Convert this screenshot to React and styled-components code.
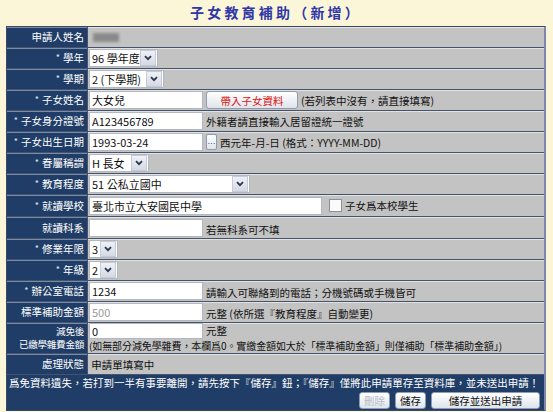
import styled, { createGlobalStyle } from 'styled-components'

const Global = createGlobalStyle`
    body {
        margin: 0;
        background: #fcf6d9;
        font-family: "Noto Sans CJK TC", "Noto Sans", sans-serif;
    }
`
const Page = styled.div`
    width: 553px;
    padding: 0 7px 0 6px;
    box-sizing: border-box;
`
const Title = styled.h1`
    margin: 0;
    height: 26px;
    line-height: 24px;
    text-align: center;
    font-size: 14px;
    font-weight: 700;
    letter-spacing: 3.2px;
    color: #3038a8;
`
const Table = styled.div`
    border: 1px solid #3d4963;
    border-right: 2px solid #7e86ae;
    background: #c3c3c3;
`
const Row = styled.div`
    display: grid;
    grid-template-columns: 81px 1fr;
    height: ${p => p.$h || 20}px;
    border-top: ${p => (p.$first ? 'none' : '1px solid #46536c')};
`
const Label = styled.div`
    background: #1f3d66;
    color: #fff;
    font-size: 10.5px;
    line-height: 14px;
    display: flex;
    flex-direction: column;
    align-items: flex-end;
    justify-content: center;
    padding-right: 3px;
    border-right: 1px solid #46536c;
    box-shadow: inset 0 1px 0 #7a8ba8;
    white-space: nowrap;
    overflow: hidden;
`
const Narrow = styled.div`
    font-size: 9.6px;
    line-height: 13px;
    letter-spacing: -0.3px;
`
const Star = styled.span`
    font-size: 9px;
    margin-right: 3px;
    color: #dfe4ee;
    vertical-align: 1px;
`
const Value = styled.div`
    display: flex;
    align-items: ${p => p.$align || 'center'};
    gap: ${p => p.$gap ?? 3}px;
    padding: ${p => (p.$align === 'flex-end' ? '0 0 1px 1px' : '0 0 0 1px')};
    font-size: 10.5px;
    color: #111;
    box-shadow: inset 0 1px 0 #e2e2e2;
    white-space: nowrap;
`
const Stack = styled.div`
    display: flex;
    flex-direction: column;
    justify-content: center;
    padding-left: 1px;
    font-size: 10.5px;
    color: #111;
    box-shadow: inset 0 1px 0 #e2e2e2;
    white-space: nowrap;
`
const Line = styled.div`
    display: flex;
    align-items: center;
    gap: 3px;
    height: 16px;
    line-height: 16px;
`
const Hint = styled.div`
    font-size: 10px;
    line-height: 14px;
    letter-spacing: -0.1px;
`
const Input = styled.input`
    width: ${p => p.$w}px;
    height: ${p => p.$h || 18}px;
    box-sizing: border-box;
    border: 1px solid #b3b8c0;
    background: #fff;
    padding: 0 2px;
    font-family: inherit;
    font-size: 11px;
    color: ${p => (p.disabled ? '#9a9a9a' : '#111')};
    outline: none;
`
const SelectBox = styled.div`
    width: ${p => p.$w}px;
    height: 18px;
    box-sizing: border-box;
    border: 1px solid #b3b8c0;
    background: #fff;
    display: flex;
    align-items: center;
    justify-content: space-between;
    font-size: 11px;
    padding-left: 2px;
`
const Arrow = styled.span`
    width: 14px;
    height: 14px;
    margin-right: 1px;
    border: 1px solid #c5ccd8;
    background: linear-gradient(#eef1f6, #d4dae5);
    display: flex;
    align-items: center;
    justify-content: center;
`
const Blur = styled.span`
    display: inline-block;
    width: 26px;
    height: 9px;
    margin-left: 4px;
    background: #8a8a8a;
    filter: blur(1.6px);
`
const Button = styled.button`
    height: ${p => p.$h || 18}px;
    width: ${p => p.$w}px;
    padding: 0;
    border: 1px solid #8f9bb0;
    border-radius: 3px;
    background: linear-gradient(#ffffff, #dfe4ec);
    font-family: inherit;
    font-size: 10.5px;
    color: ${p => p.$color || '#111'};
    cursor: pointer;
`
const DotButton = styled.span`
    width: 11px;
    height: 16px;
    box-sizing: border-box;
    border: 1px solid #8f9bb0;
    border-radius: 2px;
    background: linear-gradient(#ffffff, #dfe4ec);
    color: #2f5fb0;
    font-size: 8px;
    line-height: 18px;
    text-align: center;
`
const Check = styled.span`
    width: 11px;
    height: 11px;
    margin-left: 4px;
    border: 1px solid #8a8f98;
    background: #fafafa;
`
const Footer = styled.div`
    background: #1f3d66;
    border-top: 1px solid #46536c;
    height: 36px;
    padding: 1px 0 0 2px;
    box-sizing: border-box;
`
const Notice = styled.div`
    color: #fff;
    font-size: 10.5px;
    line-height: 13px;
    white-space: nowrap;
    overflow: hidden;
`
const Actions = styled.div`
    display: flex;
    justify-content: flex-end;
    gap: 5px;
    margin-top: 3px;
    padding-right: 4px;
`

const Chevron = () => (
    <svg width="8" height="6" viewBox="0 0 8 6">
        <path d="M1 1.2 L4 4.2 L7 1.2" fill="none" stroke="#2b3550" strokeWidth="1.8" />
    </svg>
)

const Select = ({ w, children }) => (
    <SelectBox $w={w}>
        <span>{children}</span>
        <Arrow><Chevron /></Arrow>
    </SelectBox>
)

const Req = ({ children }) => (
    <span><Star>*</Star>{children}</span>
)

const App = () => {
    return (
        <Page>
            <Global />
            <Title>子女教育補助（新增）</Title>
            <Table>
                <Row $first>
                    <Label>申請人姓名</Label>
                    <Value><Blur /></Value>
                </Row>
                <Row>
                    <Label><Req>學年</Req></Label>
                    <Value><Select w={69}>96 學年度</Select></Value>
                </Row>
                <Row>
                    <Label><Req>學期</Req></Label>
                    <Value><Select w={75}>2 (下學期)</Select></Value>
                </Row>
                <Row>
                    <Label><Req>子女姓名</Req></Label>
                    <Value>
                        <Input $w={114} defaultValue="大女兒" />
                        <Button $w={92} $color="#e01010">帶入子女資料</Button>
                        <span>(若列表中沒有，請直接填寫)</span>
                    </Value>
                </Row>
                <Row>
                    <Label><Req>子女身分證號</Req></Label>
                    <Value>
                        <Input $w={114} defaultValue="A123456789" />
                        <span>外籍者請直接輸入居留證統一證號</span>
                    </Value>
                </Row>
                <Row>
                    <Label><Req>子女出生日期</Req></Label>
                    <Value>
                        <Input $w={114} defaultValue="1993-03-24" />
                        <DotButton>…</DotButton>
                        <span>西元年-月-日 (格式：YYYY-MM-DD)</span>
                    </Value>
                </Row>
                <Row>
                    <Label><Req>眷屬稱謂</Req></Label>
                    <Value><Select w={60}>H 長女</Select></Value>
                </Row>
                <Row>
                    <Label><Req>教育程度</Req></Label>
                    <Value><Select w={161}>51 公私立國中</Select></Value>
                </Row>
                <Row $h={21}>
                    <Label><Req>就讀學校</Req></Label>
                    <Value>
                        <Input $w={233} defaultValue="臺北市立大安國民中學" />
                        <Check />
                        <span>子女爲本校學生</span>
                    </Value>
                </Row>
                <Row $h={21}>
                    <Label>就讀科系</Label>
                    <Value $align="flex-end">
                        <Input $w={114} defaultValue="" />
                        <span>若無科系可不填</span>
                    </Value>
                </Row>
                <Row>
                    <Label><Req>修業年限</Req></Label>
                    <Value><Select w={29}>3</Select></Value>
                </Row>
                <Row>
                    <Label><Req>年級</Req></Label>
                    <Value><Select w={29}>2</Select></Value>
                </Row>
                <Row>
                    <Label><Req>辦公室電話</Req></Label>
                    <Value $align="flex-end">
                        <Input $w={114} defaultValue="1234" />
                        <span>請輸入可聯絡到的電話；分機號碼或手機皆可</span>
                    </Value>
                </Row>
                <Row>
                    <Label>標準補助金額</Label>
                    <Value $align="flex-end">
                        <Input $w={114} defaultValue="500" disabled />
                        <span>元整 (依所選『教育程度』自動變更)</span>
                    </Value>
                </Row>
                <Row $h={30}>
                    <Label>
                        <Narrow>減免後</Narrow>
                        <Narrow>已繳學雜費金額</Narrow>
                    </Label>
                    <Stack>
                        <Line>
                            <Input $w={114} $h={16} defaultValue="0" />
                            <span>元整</span>
                        </Line>
                        <Hint>(如無部分減免學雜費，本欄爲0。實繳金額如大於「標準補助金額」則僅補助「標準補助金額」)</Hint>
                    </Stack>
                </Row>
                <Row>
                    <Label>處理狀態</Label>
                    <Value $gap={0}>&nbsp;申請單填寫中</Value>
                </Row>
                <Footer>
                    <Notice>爲免資料遺失，若打到一半有事要離開，請先按下『儲存』鈕；『儲存』僅將此申請單存至資料庫，並未送出申請！</Notice>
                    <Actions>
                        <Button $w={31} $h={17} $color="#b8bcc4" disabled>刪除</Button>
                        <Button $w={31} $h={17}>儲存</Button>
                        <Button $w={109} $h={17}>儲存並送出申請</Button>
                    </Actions>
                </Footer>
            </Table>
        </Page>
    )
}

export default App
